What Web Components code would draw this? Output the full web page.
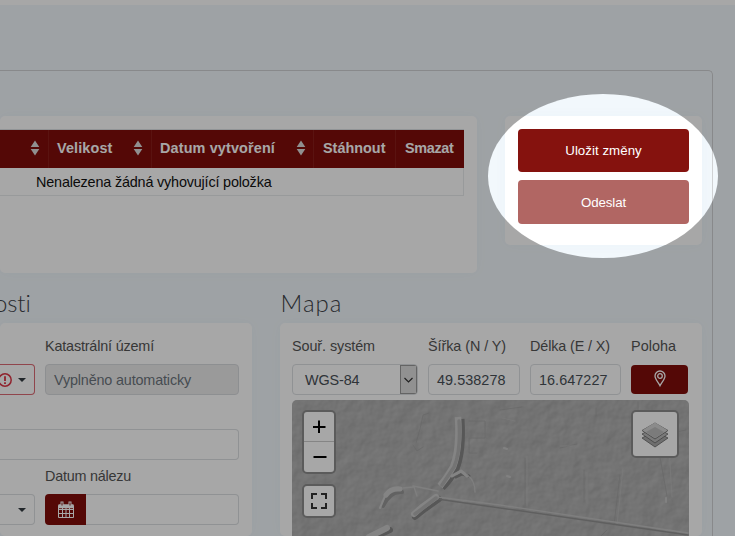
<!DOCTYPE html>
<html lang="cs"><head><meta charset="utf-8"><title>Nález</title>
<style>
html,body{margin:0;height:536px;overflow:hidden;background:#f2f8fc}
body{font:14.4px/20px "Liberation Sans",Arial,sans-serif;color:#111}
</style></head><body>
<find-page></find-page>
<script>
const define=(name,markup,after)=>{
  const t=document.createElement('template');t.innerHTML=markup;
  customElements.define(name,class extends HTMLElement{
    constructor(){super();this.attachShadow({mode:'open'}).append(t.content.cloneNode(true));}
    connectedCallback(){if(after)after.call(this,this.shadowRoot);}
  });
};

// Single line of text tracked to a given width
define('fit-text',`<style>:host{display:block;white-space:nowrap}span{display:inline-block}</style><span><slot></slot></span>`,function(r){
  const s=r.querySelector('span');s.style.letterSpacing='0';
  const w=+this.getAttribute('w'),n=this.textContent.length;
  s.style.letterSpacing=(w-s.getBoundingClientRect().width)/n+'px';
});

define('ui-card',`<style>:host{display:block;box-sizing:border-box;background:#fff;border-radius:5px;box-shadow:0 0 14px rgba(70,110,150,.03)}</style><slot></slot>`);

define('ui-button',`<style>
:host{display:flex;align-items:center;justify-content:center;box-sizing:border-box;background:#85120e;color:#fff;border-radius:4px;font-size:13.3px}
:host([disabled]){background:#b16663;padding-top:1px}</style><slot></slot>`);

define('sort-icon',`<style>:host{display:block;width:10px;height:16px}svg{display:block}</style>
<svg width="10" height="16"><path d="M5 .5 9.3 7H.7ZM5 15.500.7 9H9.3Z" fill="#dcdcdc"/></svg>`);

define('table-head',`<style>
:host{display:flex;align-items:center;justify-content:space-between;box-sizing:border-box;padding:0 10px 2px 8px;color:#fff;font-weight:700;border-left:1px solid #8a1d19}
:host(:first-child){border-left:0;justify-content:flex-end;padding-right:8px}</style><slot></slot>`);

define('file-table',`<style>
:host{display:block;box-sizing:border-box;width:464px;border-top:1px solid #dee2e6}
.head{display:grid;grid-template-columns:48px 103px 162px 82px 69px;height:38px;background:#800d0a}
.empty{box-sizing:border-box;height:28px;padding:4px 0 0 36px;border:solid #e9ebed;border-width:0 1px 1px 0}
</style><div class="head">
<table-head><sort-icon></sort-icon></table-head>
<table-head><fit-text w="55.500">Velikost</fit-text><sort-icon style="margin-right:-2px"></sort-icon></table-head>
<table-head><fit-text w="115">Datum vytvoření</fit-text><sort-icon style="margin-right:-3px"></sort-icon></table-head>
<table-head><fit-text w="62.500" style="margin-left:1px">Stáhnout</fit-text></table-head>
<table-head><fit-text w="48.500" style="margin-left:1px">Smazat</fit-text></table-head></div>
<div class="empty"><fit-text w="235.500">Nenalezena žádná vyhovující položka</fit-text></div>`);

define('ui-input',`<style>
:host{display:flex;align-items:center;box-sizing:border-box;height:31px;border:1px solid #dcdfe2;border-radius:4px;background:#fff;color:#495057;padding:1px 8px 0;overflow:hidden}
:host([readonly]){background:#ececec;color:#6c757d;border-color:#d8dade}
:host([open-left]){border-left:0;border-radius:0 4px 4px 0}
:host([invalid]){border-color:#dc6a74}
</style><slot></slot>`);

define('ui-label',`<style>:host{display:block;height:20px;color:#555}</style><slot></slot>`);
define('caret-down',`<style>:host{display:block;margin-left:auto;border:solid transparent;border-width:4px 4px 0;border-top-color:#333a40}</style>`);

define('ui-heading',`<style>:host{display:block;font:300 24px/32px Lato,"Open Sans",sans-serif;height:36px;color:#3d4248}</style><slot></slot>`);

define('detail-card',`<style>
:host{display:block;width:252px}
ui-card{height:213px;padding-top:13px}
.row{display:grid;grid-template-columns:35px 194px;column-gap:10px}
.date{display:flex}.cal{width:41px;height:31px;background:#800d0a;border-radius:4px 0 0 4px;display:grid;place-items:center}
.long{width:239px;margin:34px 0 6px}
ui-label{margin-bottom:8px}
</style><ui-heading><fit-text w="37" style="margin-left:-6px">osti</fit-text></ui-heading>
<ui-card><div class="row"><i></i><ui-label><fit-text w="109">Katastrální území</fit-text></ui-label>
<ui-input invalid style="border-left:0;border-radius:0 4px 4px 0;padding-left:0"><svg width="12" height="14" style="flex:none"><circle cx="5" cy="7" r="6.200" fill="none" stroke="#dc3545" stroke-width="1.500"/><path d="M5 3.200V8M5 9.300v1.700" stroke="#dc3545" stroke-width="1.800"/></svg><caret-down></caret-down></ui-input>
<ui-input readonly><fit-text w="137">Vyplněno automaticky</fit-text></ui-input></div>
<ui-input class="long" style="border-left:0;border-radius:0 4px 4px 0"></ui-input>
<div class="row"><i></i><ui-label><fit-text w="86">Datum nálezu</fit-text></ui-label>
<ui-input open-left><caret-down></caret-down></ui-input>
<div class="date"><div class="cal"><svg width="16" height="17" fill="none" stroke="#fff"><path d="M.5 4.500h15v12H.5ZM.5 8.500h15M.5 12.500h15M4.500 7v9M8 7v9M11.500 7v9"/><path d="M.5 4.500h15M.5 6h15" stroke-width="2.500"/><path d="M4 .5v4M12 .5v4" stroke-width="3"/><path d="M4 1.500v3M12 1.500v3" stroke="#81100b"/></svg></div><ui-input open-left style="flex:1"></ui-input></div></div></ui-card>`);

define('map-control',`<style>:host{display:flex;flex-direction:column;box-sizing:border-box;background:#fff;border:2px solid #8c8c8c;border-radius:5px;overflow:hidden;position:absolute}svg{display:block}</style><slot></slot>`);

define('relief-map',`<style>
:host{display:block;position:relative;height:136px;border-radius:5px 5px 0 0;overflow:hidden;background:#b0b0b0}
.relief{display:block}
</style><svg class="relief" width="397" height="136" fill="none" stroke-linecap="round" stroke-linejoin="round">
<defs><filter id="grain" x="0" y="0" width="100%" height="100%" color-interpolation-filters="sRGB"><feTurbulence type="fractalNoise" baseFrequency=".07" numOctaves="3" seed="8"/><feDiffuseLighting lighting-color="#f9f9f9" surfaceScale="1" diffuseConstant="1"><feDistantLight azimuth="225" elevation="45"/></feDiffuseLighting></filter>
<filter id="soft"><feGaussianBlur stdDeviation=".6"/></filter></defs>
<rect width="397" height="136" filter="url(#grain)" opacity=".3"/>
<g filter="url(#soft)">
<g stroke="#9c9c9c" stroke-width="1" opacity=".6"><path d="M137 13l-6 2-3 14-4 14M121 45l4 6 6-4M177 21h16v17h-16v15h8M268 48l17-4M233 58v46M292 70v32M328 75l-6 50M366 46l9 50M315 130l-6 6M346 2v18M208 10l22-3M304 8v8M370 35l24-5"/></g>
<g stroke="#bcbcbc" stroke-width="1" opacity=".7"><path d="M235 56v50M295 72v31M331 68l-6 57M377 48l3 49M210 18l13 3M268 46h15"/></g>
<g stroke="#858585"><path stroke-width="6" stroke-linecap="butt" d="M169.500 19q2 32-5 50-6 11-14 19"/><path stroke-width="6" d="M147 99l-14 10-10 8M98 130l-18 8"/><path stroke-width="4" d="M110 92q-12-1-19 14" stroke="#969696"/><path stroke-width="3" d="M164 77l6-3 7 2"/><path stroke-width="1.500" stroke="#929292" d="M145 99l63 9 188 27"/></g>
<g stroke="#cacaca"><path stroke-width="6.500" stroke-linecap="butt" d="M166 17q2 32-5 50-6 11-13 19"/><path stroke-width="6" d="M144 97l-14 10-8 7M95 128l-18 9"/><path stroke-width="5" d="M108 89q-9-1-14 6"/><path stroke-width="2" d="M93 96l-5 12"/><path stroke-width="3" d="M160 76l9-5 6 5"/><path stroke-width="1.300" stroke="#c2c2c2" d="M175 75q8 5 8 17M111 88l10-1M121 86l25 5M122 87l3 9M145 97l63 8 188 28"/></g>
<g stroke="#b2b2b2"><path stroke-width="3.500" d="M167 21q2 30-5 46l-12 18M144 98l-13 10-8 6"/></g>
<path d="M212 48l3 1M215 76l3 1M374 98v4" stroke="#c6c6c6" stroke-width="2"/></g></svg>
<map-control style="left:10px;top:10px;width:34px;height:64px"><svg width="30" height="60"><path d="M0 29.500h30" stroke="#ccc"/><path d="M9 15h12.500M15 8.500v12.500M9.500 45h13" stroke="#000" stroke-width="2"/></svg></map-control>
<map-control style="left:10px;top:84px;width:34px;height:34px"><svg width="30" height="30"><path d="M8 13V8h5M17 8h5v5M22 17v5h-5M13 22H8v-5" fill="none" stroke="#333" stroke-width="2"/></svg></map-control>
<map-control style="left:339px;top:10px;width:48px;height:48px"><svg width="44" height="44"><g stroke="#666" stroke-width=".8"><path d="M9 26l13-7 13 7-13 9Z" fill="#aaa"/><path d="M9 22l13-7 13 7-13 9Z" fill="#bbb"/><path d="M9 18.500 22 11l13 7.500L22 27Z" fill="#c8c8c8"/></g><path d="M9.500 18.200 22 10.500l12.500 7.700L22 26Z" fill="#d4d4d4"/><path d="M13 20l9-5 9 5-9 6Z" fill="#bcbcbc"/></svg></map-control>`);

define('map-card',`<style>
:host{display:block;width:422px}
ui-card{height:213px;padding:13px 13px 0 12px}
.fields{display:grid;grid-template-columns:126px 92px 91px 58px;column-gap:10px;row-gap:8px;margin-bottom:5px}
.arrow{box-sizing:border-box;margin:0 -8px 0 auto;width:17px;height:29px;background:#dedede;border:1px solid #999;display:grid;place-items:center;align-self:center;position:relative;top:-.5px}
</style><ui-heading><fit-text w="62" style="margin-left:.5px">Mapa</fit-text></ui-heading>
<ui-card><div class="fields">
<ui-label><fit-text w="83">Souř. systém</fit-text></ui-label><ui-label><fit-text w="78">Šířka (N / Y)</fit-text></ui-label><ui-label><fit-text w="80">Délka (E / X)</fit-text></ui-label><ui-label><fit-text w="45">Poloha</fit-text></ui-label>
<ui-input><fit-text w="54.500" style="margin-left:4px">WGS-84</fit-text><div class="arrow"><svg width="9" height="6" fill="none" stroke="#333" stroke-width="1.200"><path d="M.5 1l4 4 4-4"/></svg></div></ui-input>
<ui-input><fit-text w="68.500">49.538278</fit-text></ui-input><ui-input><fit-text w="68.500">16.647227</fit-text></ui-input>
<ui-button style="height:29px;margin:1px 1px 1px 0;background:#800d0a"><svg width="12" height="17" fill="none" stroke="#fff" stroke-width="1.300" style="margin-top:-3px"><path d="M6 15.800C4 12 1 9 1 6a5 5 0 0 1 10 0c0 3-3 6-5 9.800Z"/><circle cx="6" cy="6" r="2.300"/></svg></ui-button>
</div><relief-map></relief-map></ui-card>`);

define('find-page',`<style>
:host{display:block;position:relative;width:735px;height:536px;overflow:hidden}
.bar{height:5px;background:#fff}
.frame{box-sizing:border-box;width:713px;height:480px;margin-top:65px;border:solid #d0d2d4;border-width:1px 1px 0 0;border-top-right-radius:5px;padding-top:45px}
.row{display:flex;gap:28px;align-items:flex-start}
.files{width:477px;height:157px;padding-top:13px}
.actions{width:197px;height:129px;padding:13px;display:grid;gap:8px;grid-template-rows:43px 44px}
.forms{margin-top:14px}
.spot{position:absolute;left:488px;top:94px;width:230px;height:164px;border-radius:50%;box-shadow:0 0 0 900px rgba(0,0,0,.345)}
</style><div class="bar"></div><div class="frame">
<div class="row"><ui-card class="files"><file-table></file-table></ui-card>
<ui-card class="actions"><ui-button><fit-text w="76.500">Uložit změny</fit-text></ui-button><ui-button disabled><fit-text w="45">Odeslat</fit-text></ui-button></ui-card></div>
<div class="row forms"><detail-card></detail-card><map-card></map-card></div>
</div><div class="spot"></div>`);
</script></body></html>
